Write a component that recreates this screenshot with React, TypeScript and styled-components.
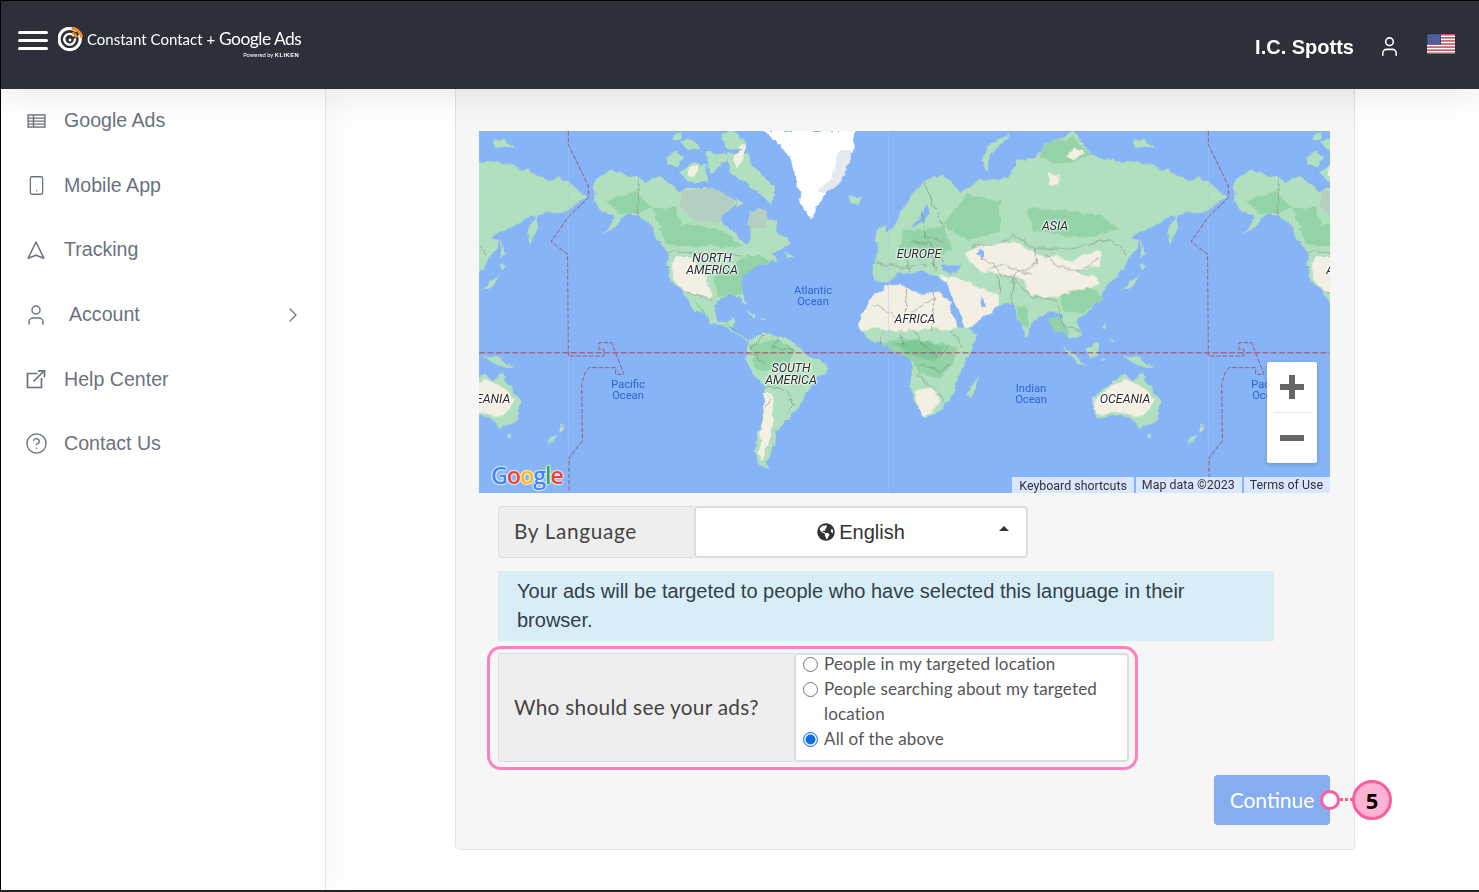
import React from 'react'
import styled, { createGlobalStyle } from 'styled-components'
import { ChevronRight, CircleHelp, Smartphone, User } from 'lucide-react'
import { FaGlobeAmericas } from 'react-icons/fa'

const GlobalStyle = createGlobalStyle`
  html, body { margin: 0; padding: 0; background: #fff; }
  * { box-sizing: border-box; }
`

const Frame = styled.div`
  width: 1479px;
  height: 892px;
  overflow: hidden;
  display: flex;
  flex-direction: column;
  border-top: 1px solid #000;
  border-left: 1px solid #000;
  border-bottom: 2px solid #222;
  font-family: 'Liberation Sans', Arial, sans-serif;
`

const Header = styled.header`
  position: relative;
  z-index: 3;
  flex: 0 0 88px;
  display: flex;
  align-items: center;
  background: #2b303b;
  padding: 0 24px 0 17px;
  box-shadow: 0 0 40px rgba(0, 0, 0, 0.12);
`

const Burger = styled.div`
  width: 30px;
  display: flex;
  flex-direction: column;
  gap: 5px;
  margin: -10px 10px 0 0;
  span {
    display: block;
    height: 3px;
    border-radius: 2px;
    background: #fff;
  }
`

const Brand = styled.div`
  display: flex;
  align-items: center;
  gap: 4px;
  margin-top: -12px;
`

const BrandText = styled.div`
  display: flex;
  flex-direction: column;
  align-items: flex-end;
  color: #fff;
  font-family: Lato, sans-serif;
  font-size: 15px;
  line-height: 18px;
  white-space: nowrap;
  small {
    font-size: 17.4px;
    letter-spacing: -0.5px;
  }
`

const PoweredBy = styled.div`
  font-size: 5.8px;
  line-height: 6px;
  margin: 4px 2px -10px 0;
  b {
    font-family: 'Liberation Sans', sans-serif;
    font-weight: 700;
    letter-spacing: 0.5px;
  }
`

const HeaderRight = styled.div`
  margin-left: auto;
  display: flex;
  align-items: center;
  color: #fff;
  padding-top: 5px;
  svg { margin-top: -3px; }
`

const UserName = styled.span`
  font-size: 20px;
  font-weight: 700;
  margin-right: 24px;
`

const FlagIcon = styled.svg`
  margin-left: 26px;
  margin-top: -8px !important;
`

const Body = styled.div`
  flex: 1;
  display: flex;
  min-height: 0;
`

const Sidebar = styled.nav`
  position: relative;
  z-index: 2;
  flex: 0 0 325px;
  background: #fff;
  border-right: 1px solid #e6e6e6;
  box-shadow: 0 0 40px rgba(0, 0, 0, 0.06);
`

const NavItem = styled.div`
  height: 64.7px;
  display: flex;
  align-items: center;
  padding: 0 20px 0 24px;
  color: #6a7280;
  font-size: 19.6px;
  &:first-child { margin-top: -0.8px; }
  svg { flex: none; }
`

const NavIcon = styled.span`
  width: 22px;
  height: 24px;
  display: flex;
  align-items: center;
  justify-content: center;
  margin-right: 17px;
`

const NavLabel = styled.span<{ $shift?: boolean }>`
  flex: 1;
  padding-left: ${(p) => (p.$shift ? '5px' : '0')};
`

const Main = styled.main`
  flex: 1;
  padding-left: 129px;
  background: #fff;
`

const Panel = styled.section`
  width: 900px;
  height: 761px;
  background: #f6f6f6;
  border: 1px solid #e3e3e3;
  border-top: 0;
  border-radius: 0 0 5px 5px;
  padding: 42px 24px 0 23px;
`

const MapBox = styled.div`
  position: relative;
  width: 851px;
  height: 362px;
  overflow: hidden;
  background: #87b3f7;
  font-family: Roboto, sans-serif;
`

const MapSvg = styled.svg`
  display: block;
`

const RegionLabel = styled.div<{ $x: number; $y: number }>`
  position: absolute;
  left: ${(p) => p.$x}px;
  top: ${(p) => p.$y}px;
  transform: translate(-50%, -50%);
  font-size: 12.4px;
  line-height: 12px;
  font-style: italic;
  text-align: center;
  white-space: pre;
  color: #2b2b2b;
  text-shadow: 0 0 2px #fff, 0 0 2px #fff, 0 0 3px #fff, 0 0 3px #fff;
`

const OceanLabel = styled.div<{ $x: number; $y: number }>`
  position: absolute;
  left: ${(p) => p.$x}px;
  top: ${(p) => p.$y}px;
  transform: translate(-50%, -50%);
  font-size: 11.2px;
  line-height: 11px;
  text-align: center;
  white-space: pre;
  color: #2f66cf;
`

const ZoomControl = styled.div`
  position: absolute;
  left: 788px;
  top: 231px;
  width: 50px;
  height: 101px;
  background: #fff;
  border-radius: 2px;
  box-shadow: 0 1px 4px rgba(0, 0, 0, 0.2);
  display: flex;
  flex-direction: column;
  align-items: center;
`

const ZoomButton = styled.div`
  flex: 1;
  display: flex;
  align-items: center;
  justify-content: center;
`

const ZoomDivider = styled.div`
  width: 37px;
  height: 1px;
  background: #e6e6e6;
`

const Attribution = styled.div`
  position: absolute;
  right: 0;
  bottom: 0;
  display: flex;
  gap: 2px;
  font-size: 12.4px;
  line-height: 16px;
  color: #333;
  span {
    background: rgba(255, 255, 255, 0.68);
    padding: 0 7px 0 6px;
    height: 16px;
  }
`

const KeyboardLink = styled.span`
  padding: 1px 7px 0 !important;
`

const GoogleMark = styled.div`
  position: absolute;
  left: 12px;
  bottom: 3px;
  font-family: 'Open Sans', sans-serif;
  font-size: 23.5px;
  line-height: 30px;
  font-weight: 600;
  letter-spacing: -1.2px;
  text-shadow: 0 0 1px #fff, 0 0 2px #fff, 0 0 2px #fff, 0 0 2px #fff;
`

const Letter = styled.span<{ $color: string }>`
  color: ${(p) => p.$color};
`

const FormArea = styled.div`
  padding-left: 19px;
`

const LanguageRow = styled.div`
  display: flex;
  height: 52px;
  width: 530px;
  margin-top: 13px;
`

const AddonLabel = styled.div<{ $width: number; $tracking: number }>`
  flex: 0 0 ${(p) => p.$width}px;
  display: flex;
  align-items: center;
  padding: 0 0 3px 15px;
  background: #eee;
  border: 1px solid #ddd;
  border-right: 0;
  border-radius: 4px 0 0 4px;
  font-family: Lato, sans-serif;
  font-size: 20.8px;
  letter-spacing: ${(p) => p.$tracking}px;
  color: #444;
`

const SelectBox = styled.div`
  position: relative;
  flex: 1;
  display: flex;
  align-items: center;
  justify-content: center;
  gap: 4px;
  background: #fff;
  border: 2px solid #ddd;
  border-radius: 4px;
  font-size: 20px;
  color: #333;
`

const Caret = styled.div`
  position: absolute;
  right: 17px;
  top: 18px;
  border-left: 5px solid transparent;
  border-right: 5px solid transparent;
  border-bottom: 5px solid #333;
`

const InfoAlert = styled.div`
  width: 776px;
  height: 70px;
  margin-top: 13px;
  padding: 6px 19px;
  background: #d9edf7;
  color: #31404a;
  font-size: 20px;
  line-height: 29px;
`

const Highlight = styled.div`
  width: 651px;
  height: 124px;
  margin: 5px 0 0 -11px;
  padding: 4px 6px 5px 8px;
  border: 3px solid #ff7fbf;
  border-radius: 14px;
  display: flex;
`

const OptionsBox = styled.div`
  flex: 1;
  background: #fff;
  border: 2px solid #ddd;
  border-radius: 4px;
  padding: 0 10px 0 6px;
`

const OptionList = styled.div`
  display: flex;
  flex-direction: column;
  margin-top: -4px;
`

const Option = styled.label`
  display: flex;
  align-items: flex-start;
  font-family: Lato, sans-serif;
  font-size: 17px;
  letter-spacing: 0.18px;
  line-height: 25px;
  color: #555;
`

const RadioDot = styled.span<{ $checked?: boolean }>`
  flex: none;
  width: 15px;
  height: 15px;
  margin: 6px 6px 0 1px;
  border-radius: 50%;
  background: #fff;
  border: ${(p) => (p.$checked ? '1.5px solid #0f6fe0' : '1.5px solid #767676')};
  box-shadow: ${(p) => (p.$checked ? 'inset 0 0 0 1.5px #fff, inset 0 0 0 8px #0f6fe0' : 'none')};
`

const ActionRow = styled.div`
  display: flex;
  justify-content: flex-end;
  width: 832px;
  margin-top: 5px;
`

const ContinueButton = styled.div`
  position: relative;
  width: 116px;
  height: 50px;
  display: flex;
  align-items: center;
  justify-content: center;
  padding-bottom: 2px;
  background: #85adf0;
  border-radius: 4px;
  color: #fff;
  font-family: Lato, sans-serif;
  font-size: 21px;
`

const CalloutDot = styled.div`
  position: absolute;
  left: 106px;
  top: 15px;
  width: 20px;
  height: 20px;
  background: #fff;
  border: 3px solid #ff5c9e;
  border-radius: 50%;
`

const CalloutLine = styled.div`
  position: absolute;
  left: 126px;
  top: 23px;
  width: 13px;
  border-top: 3px dotted #ff5c9e;
`

const CalloutBadge = styled.div`
  position: absolute;
  left: 138px;
  top: 5px;
  width: 40px;
  height: 40px;
  display: flex;
  align-items: center;
  justify-content: center;
  background: #ffb3d4;
  border: 3px solid #ff5c9e;
  border-radius: 50%;
  color: #000;
  font-family: 'Open Sans', sans-serif;
  font-weight: 700;
  font-size: 22px;
`

const LogoMark = () => (
  <svg width="25" height="25" viewBox="0 0 25 25" fill="none">
    <path d="M17.5 3.2A10.6 10.6 0 1 0 21.8 9" stroke="#fff" strokeWidth="3.2" strokeLinecap="round" />
    <path d="M15.5 8.5A5.4 5.4 0 1 0 17 12.5" stroke="#fff" strokeWidth="2.4" strokeLinecap="round" />
    <circle cx="12" cy="13" r="1.4" fill="#fff" />
    <path d="M13.5 1.2A11 11 0 0 1 23.8 10.5" stroke="#f28c1e" strokeWidth="3" />
    <path d="M14.2 6A6.5 6.5 0 0 1 18.8 10.6" stroke="#f28c1e" strokeWidth="2.4" />
  </svg>
)

const UsFlag = () => (
  <FlagIcon width="28" height="20" viewBox="0 0 28 20">
    <rect width="28" height="20" fill="#fff" />
    {[0, 1, 2, 3, 4, 5, 6].map((i) => (
      <rect key={i} y={i * 3.08} width="28" height="1.54" fill="#c2505f" />
    ))}
    <rect width="14" height="10.8" fill="#3c4a8c" />
    {[1.5, 3.5, 5.5, 7.5, 9.5].map((y) =>
      [1.5, 3.5, 5.5, 7.5, 9.5, 11.5].map((x) => (
        <rect key={`${x}-${y}`} x={x} y={y} width="0.8" height="0.8" fill="#c8cfe6" />
      ))
    )}
  </FlagIcon>
)

const TableIcon = () => (
  <svg width="19" height="14" viewBox="0 0 20 15" fill="none" stroke="#6a7280" strokeWidth="1.5">
    <rect x="1" y="1" width="18" height="13" />
    <path d="M1 4.4h18M1 7.6h18M1 10.8h18M6.8 1v13" />
  </svg>
)

const TrackingIcon = () => (
  <svg width="20" height="20" viewBox="0 0 20 20" fill="none" stroke="#6a7280" strokeWidth="1.5" strokeLinejoin="round">
    <path d="M10 2L17.8 18.2L10 15.2L2.2 18.2Z" />
  </svg>
)

const ExternalIcon = () => (
  <svg width="20" height="20" viewBox="0 0 20 20" fill="none" stroke="#6a7280" strokeWidth="1.7">
    <path d="M11.5 4.5H1.5V18.5H15.5V9" />
    <path d="M7.5 12.5L18 2" />
    <path d="M12 1.8H18.5V8.3" />
  </svg>
)

const americas = 'M342 165L352 150L372 128L405 118L440 135L478 142L505 150L545 135L575 160L600 185L620 170L660 172L700 170L725 185L760 205L770 215L745 240L728 258L735 280L770 305L795 340L810 335L812 290L815 240L845 238L865 265L890 270L905 310L928 335L915 352L880 368L895 395L865 385L835 400L815 410L795 430L785 470L798 495L802 525L785 495L750 495L715 510L708 540L715 570L745 575L760 552L768 572L755 590L775 610L800 622L815 630L800 628L770 612L740 585L700 575L670 550L640 530L625 500L610 480L575 450L565 400L570 370L535 320L520 285L480 255L445 250L420 265L410 285L365 310L402 270L405 250L365 240L345 205Z'
const southAmerica = 'M800 665L815 625L850 603L900 612L950 640L990 675L1042 695L1040 722L1000 760L975 800L950 840L890 900L885 950L860 1000L872 1020L840 1002L828 960L850 850L860 770L830 740L800 695Z'
const arctic = [
  'M565 75L590 60L610 85L595 110L565 105Z',
  'M600 120L640 95L680 105L690 150L625 155Z',
  'M575 20L610 0L605 25L585 30Z',
  'M605 30L640 25L665 50L630 58Z',
  'M685 60L730 65L745 85L700 125L685 110Z',
  'M720 10L760 0L805 35L800 55L750 55Z',
  'M740 70L800 70L835 120L890 165L880 215L840 190L800 150L760 130Z',
  'M770 200L790 215L770 225Z',
  'M1108 195L1150 200L1135 225L1112 218Z',
  'M42 30L75 25L85 45L50 50Z',
  'M800 540L830 550L825 558Z',
  'M840 560L865 565L845 568Z',
  'M920 360L945 378L920 380Z',
]
const greenland = 'M855 0L1130 0L1122 60L1100 130L1060 170L1040 190L998 262L975 240L962 190L945 130L935 80L890 30Z'

const eurasia = 'M985 200L950 170L900 140L870 150L820 125L720 95L640 90L575 70L520 5L450 35L400 80L350 90L325 140L240 150L185 185L130 130L70 150L30 200L0 250L-20 290L-60 310L-70 370L-80 420L-75 452L-35 455L-10 425L30 430L70 420L110 440L150 465L200 540L235 530L285 535L215 590L195 595L165 520L150 480L160 470L230 490L300 520L340 520L380 622L395 580L440 540L490 550L510 625L545 610L530 570L600 510L620 460L650 440L690 380L720 330L690 315L740 300L800 260L850 250L920 240Z'
const africa = 'M-123 575L-93 510L-43 465L15 460L60 490L110 480L150 510L172 585L238 608L200 680L180 725L155 800L100 850L70 862L45 810L30 770L38 700L20 665L-40 640L-90 625L-115 600Z'
const australia = 'M575 800L640 750L680 730L700 750L725 728L782 812L770 870L720 890L670 850L590 860Z'
const otherLand = [
  'M330 10L270 40L245 90L265 125L270 70L320 25Z',
  'M835 250L800 300L810 345L830 290Z',
  'M725 325L735 370L722 385Z',
  'M718 400L738 405L725 420Z',
  'M720 430L700 465L665 478L700 445Z',
  'M232 735L200 790L215 805L232 760Z',
  'M480 640L520 670L560 705L530 695Z',
  'M555 650L595 635L595 670L570 685Z',
  'M665 672L720 680L765 715L710 700Z',
  'M600 680L620 685L605 690Z',
  'M610 570L618 590L608 590Z',
  'M628 618L640 632L630 635Z',
  'M905 878L915 895L900 908Z',
  'M890 908L880 930L857 945L870 925Z',
  'M740 905L758 908L748 922Z',
  'M700 25L735 30L765 50L730 50L710 50Z',
  'M-50 280L-40 320L-70 335L-80 320Z',
]
const greenLayers = [
  'M130 280L200 190L300 210L300 300L200 330Z',
  'M435 35L520 20L570 70L500 100L420 80Z',
  'M480 490L570 470L615 500L540 550L490 540Z',
  'M-60 640L0 620L60 640L130 630L170 650L160 700L120 740L60 730L40 690Z',
  'M380 230L600 250L660 300L540 320L400 300Z',
  'M10 300L130 290L160 360L60 390L0 360Z',
  'M345 520L380 530L385 590L365 580Z',
  'M440 560L490 560L505 610L470 600Z',
]
const naGreen = [
  'M800 375L860 375L880 395L820 410L790 440L790 490L720 500L700 440L770 400Z',
  'M540 290L640 280L740 300L790 350L700 345L600 345L560 340Z',
  'M380 210L470 180L520 230L470 250L420 245Z',
  'M810 640L900 625L950 660L900 720L860 720L830 710Z',
  'M640 500L690 560L670 550Z',
  'M520 230L590 230L610 290L550 300Z',
]
const beige = [
  'M195 370L230 345L340 330L400 360L440 385L470 370L500 390L560 370L600 360L600 400L570 410L520 420L590 440L600 460L520 480L470 500L430 500L390 490L370 440L300 430L240 420L215 395Z',
  'M120 430L170 440L220 460L290 490L300 520L285 535L215 590L195 590L165 520L150 475Z',
  'M-123 575L-93 510L-43 465L15 460L60 490L110 480L150 510L172 585L150 600L100 590L40 600L-20 600L-80 590L-115 600Z',
  'M40 780L90 770L120 810L95 845L68 858Z',
  'M580 810L640 762L680 745L720 762L765 805L745 840L700 860L670 842L592 852Z',
  'M520 50L555 65L520 85L495 75Z',
  'M445 130L480 130L475 160L450 160Z',
]
const naBeige = [
  'M590 375L640 380L680 440L700 500L660 490L610 480L580 440L575 400Z',
  'M760 85L780 60L800 50L790 85L770 110Z',
  'M630 110L660 105L650 140L625 130Z',
  'M855 790L880 790L882 900L850 990L840 970Z',
  'M790 35L805 40L795 55L775 50Z',
]
const tundra = [
  'M610 180L700 170L745 190L762 212L735 250L725 275L640 265L600 220Z',
  'M815 240L860 240L865 290L815 290Z',
]
const seas = [
  'M250 390L255 360L240 350L225 365Z',
  'M150 515L190 590L178 590L145 525Z',
  'M40 290L90 250L80 220L60 250Z',
  'M-10 425L100 432L150 456L100 458L20 458Z',
  'M120 400L180 405L170 425L125 422Z',
  'M235 490L262 525L245 525Z',
]
const naBorders = 'M478 142L478 255M565 362L640 365L790 375M610 480L650 490L700 510'
const saBorders = 'M745 580L770 600L800 625M815 660L850 610M860 700L830 680L800 665M880 770L920 780L945 820L920 850M860 770L900 760L950 720M850 850L870 800M900 620L880 650L950 660'
const asiaBorders = [
  'M215 345L290 340L340 312L400 350L440 350L490 355L540 350L600 330L640 330L680 375M440 370L470 405L520 420L570 405L600 375',
  'M240 385L280 395L300 430L340 440L400 500L470 510L490 580L540 600M290 430L300 490M400 350L410 395L340 430L335 520M260 420L310 400L350 420L400 430',
  'M20 470L15 560L100 500M-80 520L-40 540L0 580M40 600L70 640L120 680L150 640M60 700L120 720L150 700M50 730L110 780L130 810M-50 600L-60 640M0 610L10 650M100 480L100 600M150 600L190 650',
  'M70 150L95 210L130 290M60 240L75 320L130 330M30 330L90 340L130 395M-70 395L0 410L80 400M0 340L30 420M90 360L110 420',
]

const WorldShapes = () => (
  <g>
    <g filter="url(#coast)">
      <path d={greenland} fill="#fff" />
      <path d="M1078 60L1122 60L1100 130L1040 190L1015 180L1060 140Z" fill="#e4e9ee" />
      <g fill="#b1e0bf">
        <path d={americas} />
        <path d={southAmerica} />
        {arctic.map((d) => <path key={d} d={d} />)}
      </g>
      {tundra.map((d) => <path key={d} d={d} fill="#b4cfc0" />)}
      {naGreen.map((d) => <path key={d} d={d} fill="#94d3a8" />)}
      {naBeige.map((d) => <path key={d} d={d} fill="#f4efe3" />)}
      <g transform="translate(1263 0)">
        <g fill="#b1e0bf">
          <path d={eurasia} />
          <path d={africa} />
          <path d={australia} />
          {otherLand.map((d) => <path key={d} d={d} />)}
        </g>
        {greenLayers.map((d) => <path key={d} d={d} fill="#94d3a8" />)}
        {beige.map((d) => <path key={d} d={d} fill="#f4efe3" />)}
        <path d="M-20 640L40 625L130 640L110 690L50 680Z" fill="#7fc998" />
        {seas.map((d) => <path key={d} d={d} fill="#87b3f7" />)}
        {asiaBorders.map((d) => <path key={d} d={d} fill="none" stroke="#6f7a74" strokeWidth="1.6" />)}
      </g>
      <path d={naBorders} fill="none" stroke="#8a948e" strokeWidth="1.6" />
      <path d={saBorders} fill="none" stroke="#6f7a74" strokeWidth="1.6" />
    </g>
    <path d="M268 0V1086M1228 0V1086" stroke="#a9c6f8" strokeWidth="1.5" />
    <path d="M268 0L268 40L328 165L328 200L268 258L216 332L266 370L268 675L375 675L375 655L360 655L360 635L398 635L435 730L410 730L410 710L330 710L318 725L308 760L310 930L270 980L270 1086" fill="none" stroke="#a04a62" strokeWidth="2.5" strokeDasharray="14 5" />
  </g>
)

const WorldMap = () => (
  <MapSvg width="851" height="362" viewBox="0 0 2553 1086">
    <defs>
      <filter id="coast" x="-5%" y="-5%" width="110%" height="110%">
        <feTurbulence type="fractalNoise" baseFrequency="0.035" numOctaves="3" seed="4" />
        <feDisplacementMap in="SourceGraphic" scale="20" xChannelSelector="R" yChannelSelector="G" />
      </filter>
      <g id="world-copy">
        <WorldShapes />
      </g>
    </defs>
    <use href="#world-copy" x="-1920" />
    <use href="#world-copy" x="0" />
    <use href="#world-copy" x="1920" />
    <path d="M0 666H2553" stroke="#a04a62" strokeWidth="2.5" strokeDasharray="18 7" fill="none" />
  </MapSvg>
)

const navItems = [
  { label: 'Google Ads', icon: <TableIcon /> },
  { label: 'Mobile App', icon: <Smartphone size={21} strokeWidth={1.5} /> },
  { label: 'Tracking', icon: <TrackingIcon /> },
  { label: 'Account', icon: <User size={24} strokeWidth={1.5} />, shift: true, arrow: true },
  { label: 'Help Center', icon: <ExternalIcon /> },
  { label: 'Contact Us', icon: <CircleHelp size={23} strokeWidth={1.4} /> },
]

const regions = [
  { text: 'NORTH\nAMERICA', x: 233, y: 133 },
  { text: 'NORTH\nAMERICA', x: 873, y: 133 },
  { text: 'SOUTH\nAMERICA', x: 312, y: 243 },
  { text: 'AFRICA', x: 436, y: 188 },
  { text: 'EUROPE', x: 440, y: 123 },
  { text: 'ASIA', x: 576, y: 95 },
  { text: 'OCEANIA', x: 646, y: 268 },
  { text: 'OCEANIA', x: 6, y: 268 },
]

const oceans = [
  { text: 'Atlantic\nOcean', x: 334, y: 165 },
  { text: 'Pacific\nOcean', x: 149, y: 259 },
  { text: 'Pacific\nOcean', x: 789, y: 259 },
  { text: 'Indian\nOcean', x: 552, y: 263 },
]

export default function App() {
  return (
    <>
      <GlobalStyle />
      <Frame>
        <Header>
          <Burger>
            <span />
            <span />
            <span />
          </Burger>
          <Brand>
            <LogoMark />
            <BrandText>
              <div>
                Constant Contact + <small>Google Ads</small>
              </div>
              <PoweredBy>
                Powered by <b>KLIKEN</b>
              </PoweredBy>
            </BrandText>
          </Brand>
          <HeaderRight>
            <UserName>I.C. Spotts</UserName>
            <User size={23} strokeWidth={1.6} />
            <UsFlag />
          </HeaderRight>
        </Header>
        <Body>
          <Sidebar>
            {navItems.map((item) => (
              <NavItem key={item.label}>
                <NavIcon>{item.icon}</NavIcon>
                <NavLabel $shift={item.shift}>{item.label}</NavLabel>
                {item.arrow && <ChevronRight size={24} strokeWidth={1.2} />}
              </NavItem>
            ))}
          </Sidebar>
          <Main>
            <Panel>
              <MapBox>
                <WorldMap />
                {regions.map((r) => (
                  <RegionLabel key={`${r.text}${r.x}`} $x={r.x} $y={r.y}>{r.text}</RegionLabel>
                ))}
                {oceans.map((o) => (
                  <OceanLabel key={`${o.text}${o.x}`} $x={o.x} $y={o.y}>{o.text}</OceanLabel>
                ))}
                <GoogleMark>
                  <Letter $color="#4285f4">G</Letter>
                  <Letter $color="#ea4335">o</Letter>
                  <Letter $color="#fbbc05">o</Letter>
                  <Letter $color="#4285f4">g</Letter>
                  <Letter $color="#34a853">l</Letter>
                  <Letter $color="#ea4335">e</Letter>
                </GoogleMark>
                <ZoomControl>
                  <ZoomButton>
                    <svg width="24" height="24" viewBox="0 0 24 24" fill="#666">
                      <path d="M9 0h6v9h9v6H15v9H9V15H0V9h9z" />
                    </svg>
                  </ZoomButton>
                  <ZoomDivider />
                  <ZoomButton>
                    <svg width="24" height="6" viewBox="0 0 24 6" fill="#666">
                      <rect width="24" height="6" />
                    </svg>
                  </ZoomButton>
                </ZoomControl>
                <Attribution>
                  <KeyboardLink>Keyboard shortcuts</KeyboardLink>
                  <span>Map data ©2023</span>
                  <span>Terms of Use</span>
                </Attribution>
              </MapBox>
              <FormArea>
                <LanguageRow>
                  <AddonLabel $width={196} $tracking={0.65}>By Language</AddonLabel>
                  <SelectBox>
                    <FaGlobeAmericas size={18} />
                    English
                    <Caret />
                  </SelectBox>
                </LanguageRow>
                <InfoAlert>
                  Your ads will be targeted to people who have selected this language in their browser.
                </InfoAlert>
                <Highlight>
                  <AddonLabel $width={296} $tracking={0.28}>Who should see your ads?</AddonLabel>
                  <OptionsBox>
                    <OptionList>
                      <Option><RadioDot />People in my targeted location</Option>
                      <Option><RadioDot />People searching about my targeted location</Option>
                      <Option><RadioDot $checked />All of the above</Option>
                    </OptionList>
                  </OptionsBox>
                </Highlight>
                <ActionRow>
                  <ContinueButton>
                    <span>Continue</span>
                    <CalloutDot />
                    <CalloutLine />
                    <CalloutBadge>5</CalloutBadge>
                  </ContinueButton>
                </ActionRow>
              </FormArea>
            </Panel>
          </Main>
        </Body>
      </Frame>
    </>
  )
}
